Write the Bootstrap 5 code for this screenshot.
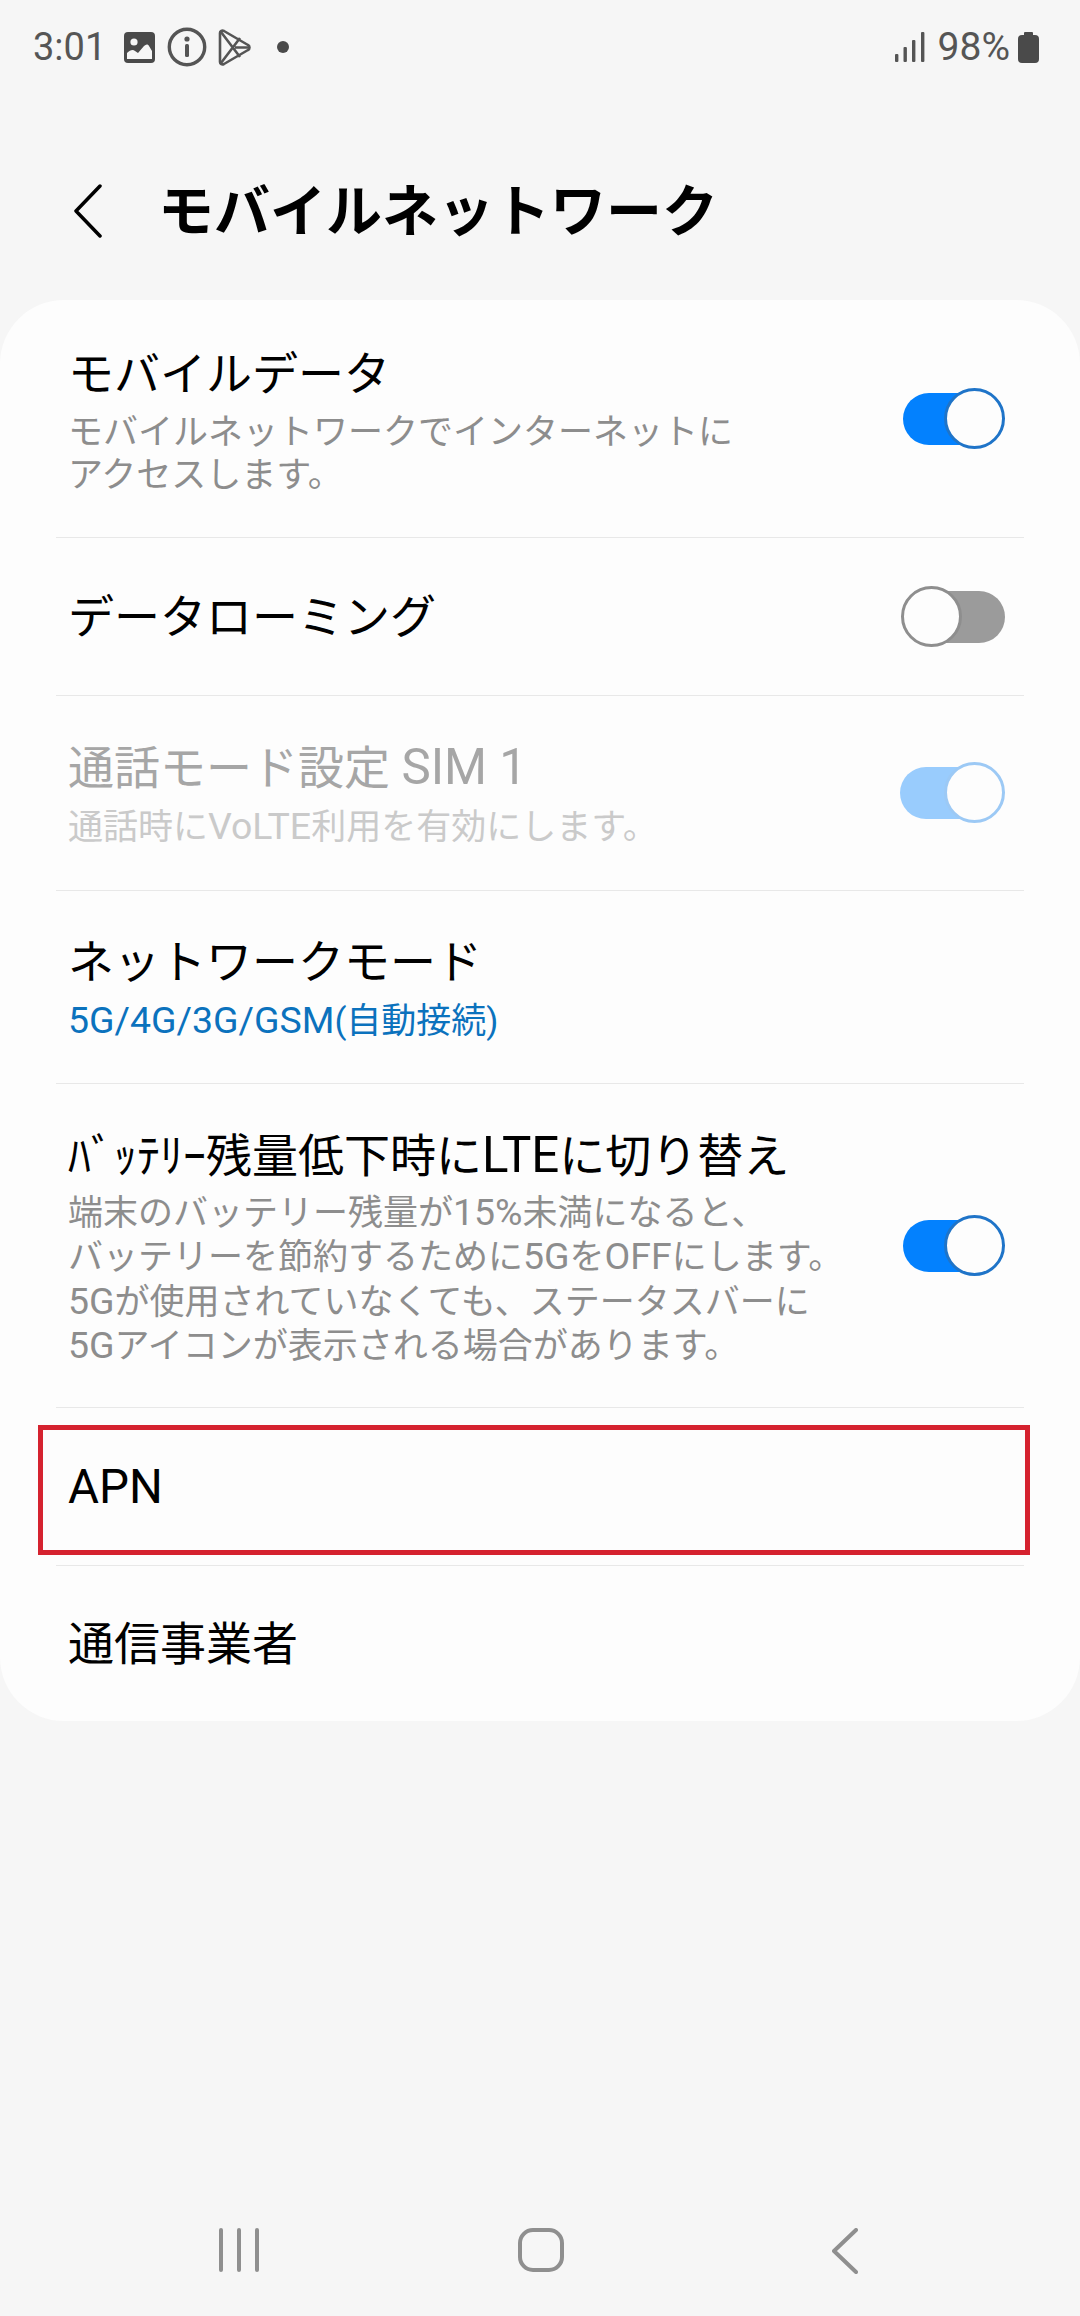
<!DOCTYPE html>
<html lang="ja">
<head>
  <meta charset="UTF-8">
  <title>モバイルネットワーク</title>
  <link href="https://cdn.jsdelivr.net/npm/bootstrap@5.3.0/dist/css/bootstrap.min.css" rel="stylesheet">
  <style>
    html, body { height: 2316px; }
    body {
      background: #f6f6f6;
      color: #000;
      font-family: Roboto, "Noto Sans CJK JP", sans-serif;
      overflow: hidden;
    }
    .page-wrap { height: 2316px; }

    .status-bar { height: 94px; padding: 0 41px 0 33px; color: #555; font-size: 38px; }
    .status-time { width: 91px; }
    .status-icon { display: block; flex: none; }
    .icon-info { margin-left: 12px; }
    .icon-play { margin-left: 11px; }
    .icon-dot { margin-left: 26px; }
    .status-pct { margin: 0 8px 0 13px; font-size: 39px; }

    .page-head { height: 206px; padding: 30px 0 0 74px; }
    .back-icon { display: block; margin-right: 56px; margin-top: -2px; }
    .page-title { font-size: 56px; font-weight: 700; margin: 0; line-height: 1; }

    .settings-card {
      background: #fdfdfd;
      border-radius: 64px;
      height: 1421px;
    }
    .setting-row {
      background: transparent;
      margin: 0 56px;
      padding: 0 19px 0 12px;
      border: 0;
      border-bottom: 3px solid #e8e8e8;
      border-radius: 0 !important;
      color: #000;
    }
    .setting-row:last-child { border-bottom: 0; }
    .row-h1 { height: 238px; }
    .row-h2 { height: 158px; }
    .row-h3 { height: 195px; }
    .row-h4 { height: 193px; }
    .row-h5 { height: 324px; }
    .row-h6 { height: 158px; }
    .row-h7 { height: 155px; }
    .row-h1 .text-col { padding-top: 4px; }
    .row-h5 .text-col { padding-top: 2px; }

    .setting-title { font-size: 46px; line-height: 60px; }
    .setting-sub { font-size: 35px; line-height: 43.4px; color: #8d8d8d; margin-top: 7px; }
    .row-h5 .setting-sub { margin-top: 5px; }
    .setting-link { font-size: 35px; line-height: 43px; color: #0b72bd; margin-top: 7px; }
    .lat-text { font-size: 1.07em; }
    .apn-label { font-size: 47.5px; }
    .is-disabled .setting-title { color: #a6a6a6; }
    .is-disabled .setting-sub { color: #cacaca; }

    .apn-frame {
      position: absolute;
      left: -18px; right: -6px;
      top: 17px; height: 130px;
      border: 5px solid #d5222f;
      pointer-events: none;
    }

    .toggle-sw { position: relative; flex: none; height: 52px; border-radius: 26px; }
    .toggle-sw::after {
      content: "";
      position: absolute;
      top: -5px;
      width: 61px; height: 61px;
      border-radius: 50%;
      background: #fdfdfd;
      border: 3px solid;
    }
    .toggle-sw.on { background: #0381fe; width: 98px; margin-right: 4px; }
    .toggle-sw.on::after { right: -4px; border-color: #1f74c8; }
    .toggle-sw.off { background: #9b9b9b; width: 92px; }
    .toggle-sw.off::after { left: -12px; border-color: #8e8e8e; }
    .toggle-sw.dim { background: #99ccfd; width: 101px; margin-right: 4px; }
    .toggle-sw.dim::after { right: -4px; border-color: #9cc9f5; }

    .nav-keys { height: 116px; padding: 28px 0 0 219px; }
    .nav-keys svg { display: block; flex: none; }
    .key-home { margin-left: 259px; }
    .key-back { margin-left: 268px; }
  </style>
</head>
<body>
<div class="page-wrap d-flex flex-column">

  <div class="status-bar d-flex align-items-center">
    <span class="status-time">3:01</span>
    <svg class="status-icon" width="31" height="31" viewBox="0 0 31 31">
      <rect width="31" height="31" rx="4" fill="#4a4a4a"/>
      <circle cx="10" cy="10" r="3.6" fill="#f6f6f6"/>
      <path d="M3 27v-6c3-3 6-4 8-2l3 2 6-7c2-2 4-2 5 0l3 5v8z" fill="#f6f6f6"/>
    </svg>
    <svg class="status-icon icon-info" width="40" height="40" viewBox="0 0 40 40">
      <circle cx="20" cy="20" r="17.7" fill="none" stroke="#555" stroke-width="3.4"/>
      <circle cx="20" cy="12" r="2.6" fill="#555"/>
      <rect x="18" y="17" width="4" height="13" rx="1.5" fill="#555"/>
    </svg>
    <svg class="status-icon icon-play" width="33" height="37" viewBox="0 0 33 37" fill="none" stroke="#555" stroke-width="2.6" stroke-linejoin="round">
      <path d="M2 4c0-2 2-3 4-2l24 14c2 1 2 4 0 5L6 35c-2 1-4 0-4-2z"/>
      <path d="M3 3l19 25M3 34L22 9M17 18.500h14"/>
    </svg>
    <svg class="status-icon icon-dot" width="12" height="12" viewBox="0 0 12 12"><circle cx="6" cy="6" r="6" fill="#4a4a4a"/></svg>
    <div class="flex-grow-1"></div>
    <svg class="status-icon" width="30" height="30" viewBox="0 0 30 30" fill="#555">
      <rect x="0" y="22" width="3.400" height="8" rx="1"/>
      <rect x="8.500" y="15" width="3.400" height="15" rx="1"/>
      <rect x="17" y="8" width="3.400" height="22" rx="1"/>
      <rect x="26" y="0" width="3.400" height="30" rx="1"/>
    </svg>
    <span class="status-pct">98%</span>
    <svg class="status-icon" width="21" height="31" viewBox="0 0 21 31" fill="#4a4a4a">
      <rect x="6" y="0" width="9" height="4" rx="1"/>
      <rect x="0" y="3" width="21" height="28" rx="4"/>
    </svg>
  </div>

  <div class="page-head d-flex align-items-center">
    <svg class="back-icon" width="28" height="54" viewBox="0 0 28 54" fill="none" stroke="#000" stroke-width="3.500" stroke-linecap="round" stroke-linejoin="round">
      <path d="M26 2L2 27l24 25"/>
    </svg>
    <h1 class="page-title">モバイルネットワーク</h1>
  </div>

  <div class="settings-card">
    <div class="list-group list-group-flush">
      <div class="list-group-item setting-row row-h1 d-flex align-items-center justify-content-between">
        <div class="text-col">
          <div class="setting-title">モバイルデータ</div>
          <div class="setting-sub">モバイルネットワークでインターネットに<br>アクセスします。</div>
        </div>
        <div class="toggle-sw on"></div>
      </div>
      <div class="list-group-item setting-row row-h2 d-flex align-items-center justify-content-between">
        <div class="setting-title">データローミング</div>
        <div class="toggle-sw off"></div>
      </div>
      <div class="list-group-item setting-row row-h3 is-disabled d-flex align-items-center justify-content-between">
        <div class="text-col">
          <div class="setting-title">通話モード設定 <span class="lat-text">SIM 1</span></div>
          <div class="setting-sub">通話時に<span class="lat-text">VoLTE</span>利用を有効にします。</div>
        </div>
        <div class="toggle-sw dim"></div>
      </div>
      <div class="list-group-item setting-row row-h4 d-flex align-items-center justify-content-between">
        <div class="text-col">
          <div class="setting-title">ネットワークモード</div>
          <div class="setting-link"><span class="lat-text">5G/4G/3G/GSM</span>(自動接続)</div>
        </div>
      </div>
      <div class="list-group-item setting-row row-h5 d-flex align-items-center justify-content-between">
        <div class="text-col">
          <div class="setting-title">ﾊﾞｯﾃﾘｰ残量低下時に<span class="lat-text">LTE</span>に切り替え</div>
          <div class="setting-sub">端末のバッテリー残量が<span class="lat-text">15%</span>未満になると、<br>バッテリーを節約するために<span class="lat-text">5G</span>を<span class="lat-text">OFF</span>にします。<br><span class="lat-text">5G</span>が使用されていなくても、ステータスバーに<br><span class="lat-text">5G</span>アイコンが表示される場合があります。</div>
        </div>
        <div class="toggle-sw on"></div>
      </div>
      <div class="list-group-item setting-row row-h6 position-relative d-flex align-items-center">
        <div class="setting-title apn-label">APN</div>
        <div class="apn-frame"></div>
      </div>
      <div class="list-group-item setting-row row-h7 d-flex align-items-center">
        <div class="setting-title">通信事業者</div>
      </div>
    </div>
  </div>

  <div class="nav-keys mt-auto d-flex align-items-start">
    <svg width="40" height="44" viewBox="0 0 40 44" fill="none" stroke="#8f8f8f" stroke-width="4" stroke-linecap="round">
      <path d="M2 2v40M20 2v40M38 2v40"/>
    </svg>
    <svg class="key-home" width="46" height="44" viewBox="0 0 46 44" fill="none" stroke="#8f8f8f" stroke-width="4">
      <rect x="2" y="2" width="42" height="40" rx="13"/>
    </svg>
    <svg class="key-back" width="26" height="46" viewBox="0 0 26 46" fill="none" stroke="#8f8f8f" stroke-width="4" stroke-linecap="round" stroke-linejoin="round">
      <path d="M24 2L2 23l22 21"/>
    </svg>
  </div>
</div>
<script src="https://cdn.jsdelivr.net/npm/bootstrap@5.3.0/dist/js/bootstrap.bundle.min.js"></script>
</body>
</html>
